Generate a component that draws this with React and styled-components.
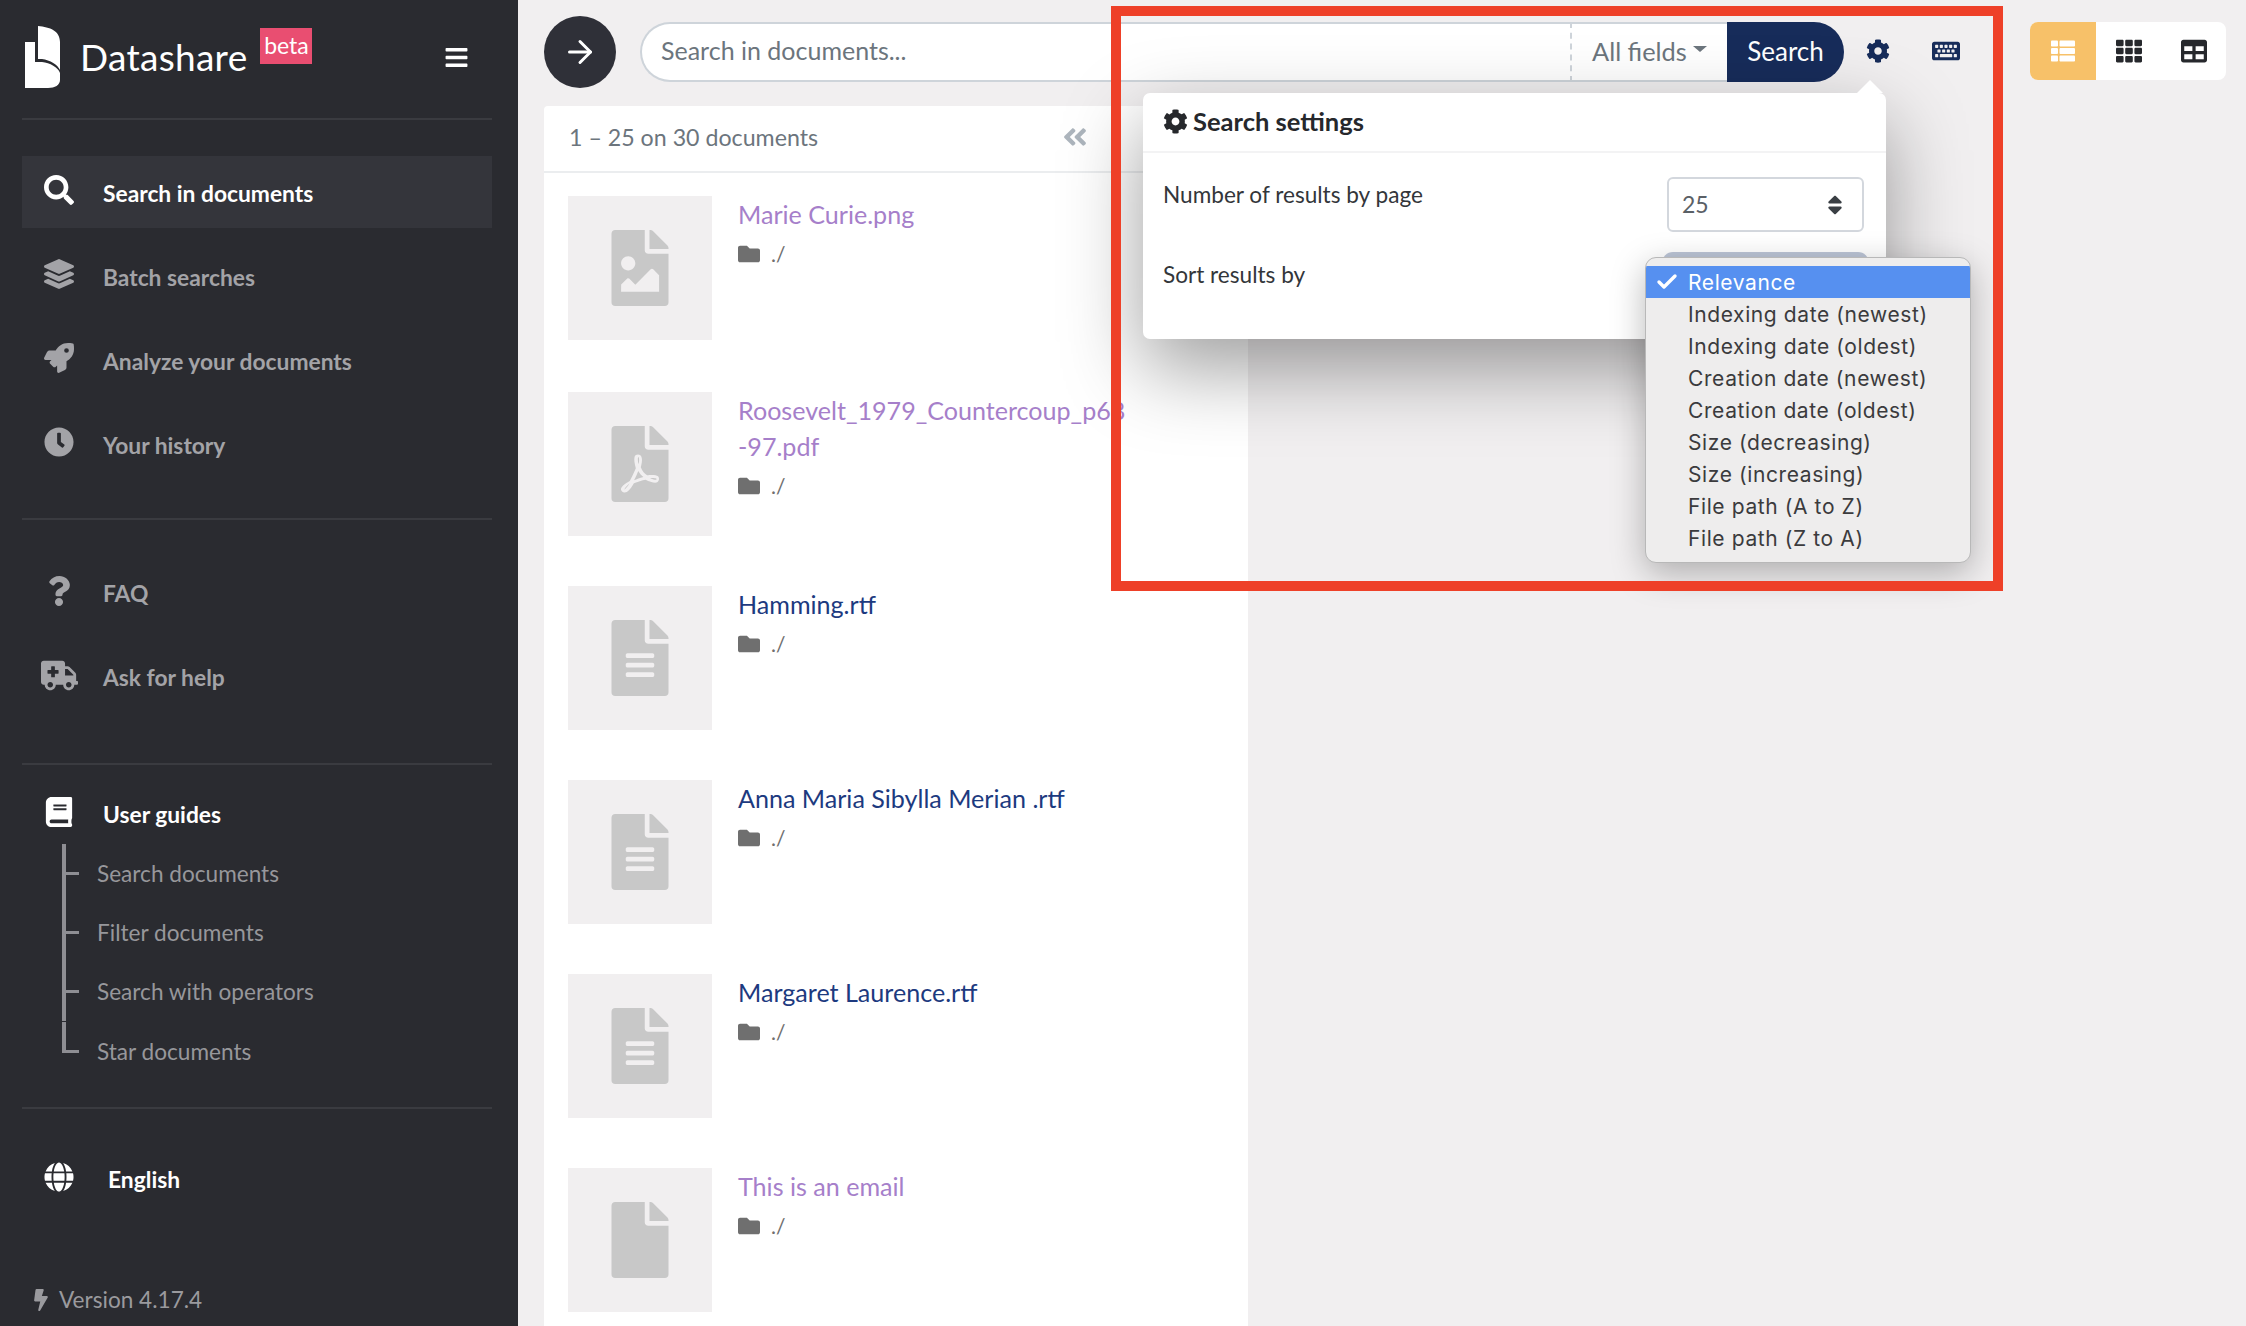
import React from "react";
import styled, { createGlobalStyle } from "styled-components";
import {
  FaSearch, FaLayerGroup, FaRocket, FaClock, FaQuestion, FaAmbulance, FaBook, FaGlobe, FaBolt,
  FaCog, FaKeyboard, FaThList, FaTh, FaTable, FaFolder, FaFileImage, FaFilePdf, FaFileAlt, FaFile,
  FaAngleDoubleLeft, FaAngleLeft, FaBars, FaSort,
} from "react-icons/fa";
import { ArrowRight, Check } from "lucide-react";

const Global = createGlobalStyle`
  html, body { margin: 0; padding: 0; background: #f1eff0; overflow: hidden; }
  body { font-family: "Lato", "Liberation Sans", sans-serif; }
  * { box-sizing: border-box; }
  svg { flex: none; }
`;

const Page = styled.div`
  position: relative;
  display: grid;
  grid-template-columns: 518px 1fr;
  width: 2246px;
  height: 1326px;
  overflow: hidden;
  background: #f1eff0;
`;

const Sidebar = styled.aside`
  display: flex;
  flex-direction: column;
  height: 1326px;
  padding: 0 26px 0 22px;
  background: #2a2b30;
  color: #a3a3a7;
`;
const Brand = styled.div`
  display: flex;
  align-items: center;
  height: 120px;
  padding: 0 0 4px 3px;
  border-bottom: 2px solid #3a3b40;
`;
const BrandName = styled.span`
  margin-left: 20px;
  font-size: 37px;
  font-weight: 400;
  color: #fff;
  letter-spacing: 0.3px;
  margin-top: -2px;
`;
const Beta = styled.span`
  align-self: flex-start;
  margin: 28px 0 0 13px;
  width: 52px;
  height: 36px;
  background: #e94e71;
  color: #fff;
  font-size: 23px;
  line-height: 34px;
  text-align: center;
`;
const Burger = styled.span`
  display: flex;
  margin-left: auto;
  margin-right: 23px;
  color: #fff;
`;
const NavSection = styled.nav`
  display: flex;
  flex-direction: column;
  gap: 12px;
  padding: ${(p) => p.$pad};
  border-bottom: 2px solid #3a3b40;
`;
const NavRow = styled.div`
  display: flex;
  align-items: center;
  height: ${(p) => p.$height || 72}px;
  padding-left: 22px;
  gap: ${(p) => p.$gap || 29}px;
  background: ${(p) => (p.$active ? "#34353b" : "transparent")};
  color: ${(p) => (p.$bright ? "#fff" : "#a3a3a7")};
`;
const LanguageRow = styled(NavRow)`
  margin-top: 34px;
`;
const NavIcon = styled.span`
  display: flex;
  justify-content: center;
  width: 30px;
  margin-top: -4px;
  flex: none;
`;
const NavLabel = styled.span`
  font-size: 22.8px;
  font-weight: 700;
  padding-top: ${(p) => (p.$low ? 1 : 0)}px;
`;
const Tree = styled.ul`
  list-style: none;
  margin: 0 0 0 40px;
  padding: 0;
`;
const TreeItem = styled.li`
  display: flex;
  height: ${(p) => (p.$last ? 31 : 59)}px;
  align-items: ${(p) => (p.$last ? "flex-end" : "center")};
  margin-top: ${(p) => (p.$last ? 1 : 0)}px;
  border-left: 4px solid #8e8e93;
  color: #97979b;
  font-size: 22.6px;
  &::before {
    content: "";
    width: 13px;
    height: 3px;
    margin-right: 18px;
    background: #8e8e93;
  }
`;
const TreeLabel = styled.span`
  line-height: 28px;
  margin-bottom: ${(p) => (p.$last ? -13 : 0)}px;
`;
const Version = styled.div`
  display: flex;
  align-items: center;
  gap: 7px;
  margin-top: auto;
  padding: 0 0 13px 8px;
  font-size: 22.6px;
  color: #9a9a9e;
`;

const Main = styled.main`
  display: flex;
  flex-direction: column;
  height: 1326px;
  padding: 16px 20px 0 26px;
  overflow: hidden;
`;
const TopBar = styled.div`
  display: flex;
  align-items: center;
  height: 72px;
`;
const Circle = styled.div`
  display: flex;
  align-items: center;
  justify-content: center;
  width: 72px;
  height: 72px;
  border-radius: 50%;
  background: #2f3038;
  color: #fff;
  flex: none;
`;
const SearchField = styled.div`
  display: flex;
  flex: 1;
  height: 60px;
  margin-left: 24px;
`;
const SearchInput = styled.div`
  display: flex;
  align-items: center;
  flex: 1;
  padding: 0 0 4px 19px;
  background: #fff;
  border: 2px solid #ced4da;
  border-right: 0;
  border-radius: 30px 0 0 30px;
  color: #6c757d;
  font-size: 25px;
`;
const FieldSelect = styled.div`
  display: flex;
  align-items: center;
  width: 157px;
  padding: 0 0 3px 20px;
  background: #fff;
  border: 2px solid #ced4da;
  border-left: 2px dashed #ced4da;
  border-right: 0;
  color: #6c757d;
  font-size: 25.4px;
  &::after {
    content: "";
    margin-left: 6px;
    margin-top: -4px;
    border-top: 6px solid #6c757d;
    border-left: 7px solid transparent;
    border-right: 7px solid transparent;
  }
`;
const SearchButton = styled.div`
  display: flex;
  align-items: center;
  justify-content: center;
  width: 117px;
  padding: 0 0 3px 0;
  background: #172c5a;
  color: #fff;
  font-size: 26px;
  border-radius: 0 30px 30px 0;
`;
const ToolButton = styled.div`
  display: flex;
  align-items: center;
  justify-content: center;
  width: 68px;
  margin-top: -2px;
  color: #172c5a;
`;
const ViewGroup = styled.div`
  display: flex;
  height: 58px;
  margin: -2px 0 0 50px;
  background: #fff;
  border-radius: 8px;
  overflow: hidden;
  color: #26282c;
`;
const ViewButton = styled.div`
  display: flex;
  align-items: center;
  justify-content: center;
  width: ${(p) => (p.$active ? 66 : 65)}px;
  background: ${(p) => (p.$active ? "#f7c169" : "transparent")};
  color: ${(p) => (p.$active ? "#fff" : "inherit")};
`;

const Card = styled.section`
  width: 704px;
  margin-top: 18px;
  flex: 1;
  background: #fff;
  border-radius: 4px 4px 0 0;
`;
const CardHead = styled.header`
  display: flex;
  align-items: center;
  height: 67px;
  padding: 0 0 3px 25px;
  border-bottom: 2px solid #ebedef;
  color: #6c757d;
  font-size: 23.2px;
`;
const Pager = styled.span`
  display: flex;
  align-items: center;
  gap: 16px;
  margin-left: auto;
  margin-right: 121px;
  color: #adb5bd;
`;
const DocList = styled.div`
  display: flex;
  flex-direction: column;
  gap: 50px;
  padding: 23px 0 0 24px;
`;
const DocRow = styled.article`
  display: flex;
  gap: 26px;
  margin-bottom: ${(p) => (p.$extra ? 2 : 0)}px;
`;
const Thumb = styled.div`
  display: flex;
  align-items: center;
  justify-content: center;
  width: 144px;
  height: 144px;
  background: #f1eff0;
  color: #c8c8c8;
  flex: none;
`;
const DocInfo = styled.div`
  padding-top: 0;
`;
const DocTitle = styled.a`
  display: block;
  font-size: 25.1px;
  line-height: 36px;
  color: ${(p) => (p.$visited ? "#a67fca" : "#1d3a7f")};
`;
const DocPath = styled.div`
  display: flex;
  align-items: center;
  gap: 11px;
  height: 43px;
  color: #6f6f6f;
  font-size: 21px;
`;

const Popover = styled.div`
  position: absolute;
  left: 1143px;
  top: 93px;
  width: 743px;
  height: 246px;
  background: #fff;
  border-radius: 7px;
  box-shadow: 0 30px 80px rgba(0, 0, 0, 0.38);
  z-index: 10;
  &::before {
    content: "";
    position: absolute;
    top: -13px;
    right: 3px;
    width: 0;
    height: 0;
    border-bottom: 13px solid #fff;
    border-left: 13px solid transparent;
    border-right: 13px solid transparent;
  }
`;
const PopHead = styled.h3`
  display: flex;
  align-items: center;
  gap: 5px;
  margin: 0;
  height: 60px;
  padding: 0 0 2px 20px;
  border-bottom: 2px solid #f3f3f4;
  color: #26282c;
  font-size: 25.5px;
  font-weight: 700;
`;
const PopBody = styled.div`
  display: flex;
  flex-direction: column;
  gap: 25px;
  padding: 24px 22px 0 20px;
`;
const FormRow = styled.div`
  display: flex;
  justify-content: space-between;
  color: #33363a;
  font-size: 22.6px;
  line-height: 35px;
`;
const SelectBox = styled.div`
  display: flex;
  align-items: center;
  justify-content: space-between;
  width: 197px;
  height: 55px;
  padding: 0 15px 0 13px;
  background: #fff;
  border: 2px solid ${(p) => (p.$focus ? "#c4425f" : "#d3d7dd")};
  border-radius: 6px;
  box-shadow: ${(p) => (p.$focus ? "0 0 0 5px #bcc5d6" : "none")};
  color: #5a6066;
  font-size: 23px;
`;
const Dropdown = styled.ul`
  position: absolute;
  left: 1645px;
  top: 257px;
  width: 326px;
  height: 306px;
  margin: 0;
  padding: 8px 0 0;
  list-style: none;
  background: #eeeded;
  border: 1px solid #b8b8b8;
  border-radius: 11px;
  box-shadow: 0 10px 34px rgba(0, 0, 0, 0.28);
  z-index: 20;
  overflow: hidden;
  font-family: "Inter", "Liberation Sans", sans-serif;
`;
const Option = styled.li`
  display: flex;
  align-items: center;
  height: 32px;
  padding-left: 9px;
  background: ${(p) => (p.$selected ? "#5690f0" : "transparent")};
  color: ${(p) => (p.$selected ? "#fff" : "#3b3b3d")};
  font-size: 21px;
  letter-spacing: 0.6px;
`;
const CheckSlot = styled.span`
  display: flex;
  width: 33px;
  flex: none;
`;
const Highlight = styled.div`
  position: absolute;
  left: 1111px;
  top: 6px;
  width: 892px;
  height: 585px;
  border: 10px solid #ee4028;
  z-index: 30;
  pointer-events: none;
`;

const Logo = () => (
  <svg width="35" height="62" viewBox="25 26 35 62" fill="#fff">
    <path d="M38 26C50 27 60 31 60 42L60 70C58 65 50 60 42 59L38 59Z" />
    <path d="M25 42L35 42L35 62L42 62C50 63 58 67 60 73L60 80C60 85 55 88 48 88L25 88Z" />
  </svg>
);

const docs = [
  { icon: FaFileImage, title: ["Marie Curie.png"], visited: true, extra: true },
  { icon: FaFilePdf, title: ["Roosevelt_1979_Countercoup_p68", "-97.pdf"], visited: true },
  { icon: FaFileAlt, title: ["Hamming.rtf"] },
  { icon: FaFileAlt, title: ["Anna Maria Sibylla Merian .rtf"] },
  { icon: FaFileAlt, title: ["Margaret Laurence.rtf"] },
  { icon: FaFile, title: ["This is an email"], visited: true },
];

const sortOptions = [
  "Relevance", "Indexing date (newest)", "Indexing date (oldest)", "Creation date (newest)",
  "Creation date (oldest)", "Size (decreasing)", "Size (increasing)", "File path (A to Z)", "File path (Z to A)",
];

const guides = ["Search documents", "Filter documents", "Search with operators"];

export default function App() {
  return (
    <Page>
      <Global />
      <Sidebar>
        <Brand>
          <Logo />
          <BrandName>Datashare</BrandName>
          <Beta>beta</Beta>
          <Burger><FaBars size={25} /></Burger>
        </Brand>
        <NavSection $pad="36px 0 38px">
          <NavRow $active $bright><NavIcon><FaSearch size={30} /></NavIcon><NavLabel $low>Search in documents</NavLabel></NavRow>
          <NavRow><NavIcon><FaLayerGroup size={30} /></NavIcon><NavLabel $low>Batch searches</NavLabel></NavRow>
          <NavRow><NavIcon><FaRocket size={30} /></NavIcon><NavLabel $low>Analyze your documents</NavLabel></NavRow>
          <NavRow><NavIcon><FaClock size={30} /></NavIcon><NavLabel $low>Your history</NavLabel></NavRow>
        </NavSection>
        <NavSection $pad="37px 0 50px">
          <NavRow><NavIcon><FaQuestion size={30} /></NavIcon><NavLabel>FAQ</NavLabel></NavRow>
          <NavRow><NavIcon><FaAmbulance size={37} /></NavIcon><NavLabel>Ask for help</NavLabel></NavRow>
        </NavSection>
        <NavSection $pad="19px 0 54px">
          <div>
            <NavRow $bright $height={60}><NavIcon><FaBook size={30} /></NavIcon><NavLabel>User guides</NavLabel></NavRow>
            <Tree>
              {guides.map((g) => (
                <TreeItem key={g}><TreeLabel>{g}</TreeLabel></TreeItem>
              ))}
              <TreeItem $last><TreeLabel $last>Star documents</TreeLabel></TreeItem>
            </Tree>
          </div>
        </NavSection>
        <LanguageRow $bright $gap={34}>
          <NavIcon><FaGlobe size={30} /></NavIcon><NavLabel>English</NavLabel>
        </LanguageRow>
        <Version><FaBolt size={22} />Version 4.17.4</Version>
      </Sidebar>
      <Main>
        <TopBar>
          <Circle><ArrowRight size={36} strokeWidth={2} /></Circle>
          <SearchField>
            <SearchInput>Search in documents...</SearchInput>
            <FieldSelect>All fields</FieldSelect>
            <SearchButton>Search</SearchButton>
          </SearchField>
          <ToolButton><FaCog size={24} /></ToolButton>
          <ToolButton><FaKeyboard size={28} /></ToolButton>
          <ViewGroup>
            <ViewButton $active><FaThList size={24} /></ViewButton>
            <ViewButton><FaTh size={26} /></ViewButton>
            <ViewButton><FaTable size={26} /></ViewButton>
          </ViewGroup>
        </TopBar>
        <Card>
          <CardHead>
            1 – 25 on 30 documents
            <Pager><FaAngleDoubleLeft size={28} /><FaAngleLeft size={22} /></Pager>
          </CardHead>
          <DocList>
            {docs.map((d) => (
              <DocRow key={d.title[0]} $extra={d.extra}>
                <Thumb><d.icon size={76} /></Thumb>
                <DocInfo>
                  <DocTitle $visited={d.visited}>
                    {d.title.map((line) => <div key={line}>{line}</div>)}
                  </DocTitle>
                  <DocPath><FaFolder size={22} />./</DocPath>
                </DocInfo>
              </DocRow>
            ))}
          </DocList>
        </Card>
      </Main>
      <Popover>
        <PopHead><FaCog size={25} />Search settings</PopHead>
        <PopBody>
          <FormRow>
            Number of results by page
            <SelectBox>25<FaSort size={24} color="#3a3f44" /></SelectBox>
          </FormRow>
          <FormRow>
            Sort results by
            <SelectBox $focus />
          </FormRow>
        </PopBody>
      </Popover>
      <Dropdown>
        {sortOptions.map((o, i) => (
          <Option key={o} $selected={i === 0}>
            <CheckSlot>{i === 0 && <Check size={24} strokeWidth={3.4} />}</CheckSlot>
            {o}
          </Option>
        ))}
      </Dropdown>
      <Highlight />
    </Page>
  );
}
